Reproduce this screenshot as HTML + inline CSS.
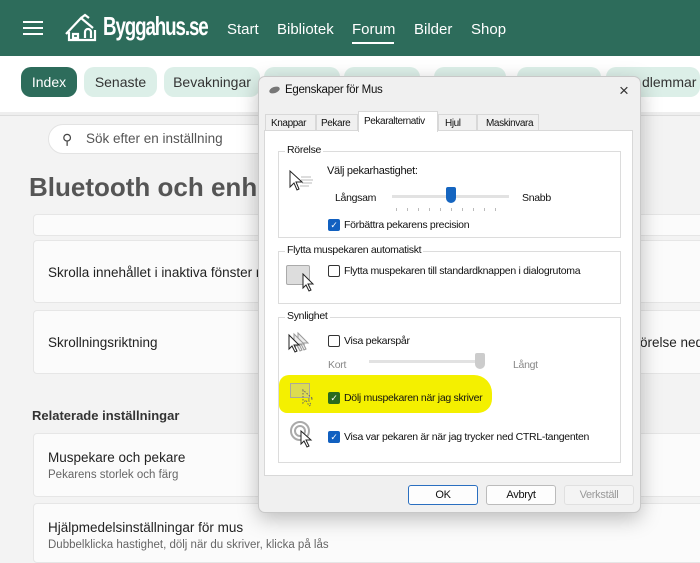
<!DOCTYPE html>
<html><head><meta charset="utf-8"><style>
*{box-sizing:border-box;margin:0;padding:0}
body{width:700px;height:554px;overflow:hidden;background:#f3f3f3;font-family:"Liberation Sans","DejaVu Sans",sans-serif;position:relative;white-space:nowrap}
.abs{position:absolute}
.nav{left:0;top:0;width:700px;height:56px;background:#2d6c5b}
.nav .l{color:#fff;font-size:15px;top:21px}
.pills{left:0;top:56px;width:700px;height:56px;background:#fff}
.pill{top:67px;height:30px;border-radius:10px;background:#dcefe8;color:#333;font-size:14px;line-height:30px;text-align:center}
.card{background:#fbfbfb;border:1px solid #e6e6e6;border-radius:4px}
.t{font-size:13.5px;color:#222}
.dlg{left:258px;top:76px;width:383px;height:437px;background:#f0f0f0;border:1px solid #c8c8c8;border-radius:7px;box-shadow:0 6px 20px rgba(0,0,0,.25);font-size:10.5px;letter-spacing:-.3px;color:#111;font-family:"Liberation Sans",sans-serif}
.dlg .abs{position:absolute}
.box{border:1px solid #dcdcdc}
.lg{background:#fff;padding:0 2px}
.cb{width:12px;height:12px;border-radius:2px;border:1px solid #333;background:#fff}
.cbc{width:12px;height:12px;border-radius:2px;background:#1160c0;color:#fff;font-size:9px;line-height:12px;text-align:center}
.btn{height:20px;border:1px solid #bbb;border-radius:3px;background:#fdfdfd;text-align:center;line-height:18px;font-size:11px}
.tab{font-size:10px;letter-spacing:-.4px}
</style></head><body>
<div class="abs nav">
 <div class="abs" style="left:23px;top:21px;width:20px;height:2px;background:#fff;box-shadow:0 6px 0 #fff,0 12px 0 #fff"></div>
 <svg class="abs" style="left:63px;top:12px" width="38" height="32" viewBox="0 0 38 32"><path d="M3 22 L18 6 L30 16 M6 20 L6 28 L32 28 L32 18 M18 6 L22 3 L26 6 M10 22 h5 v4 h-5z M22 26 v-6 a3 3 0 0 1 6 0 v6" stroke="#fff" stroke-width="2.2" fill="none"/></svg>
 <div class="abs" style="left:103px;top:11px;color:#fff;font-size:26px;font-weight:bold;letter-spacing:-1.5px;transform:scaleX(.72);transform-origin:left">Byggahus.se</div>
 <div class="abs l" style="left:227px">Start</div>
 <div class="abs l" style="left:277px">Bibliotek</div>
 <div class="abs l" style="left:352px">Forum</div>
 <div class="abs" style="left:352px;top:42px;width:42px;height:2px;background:#fff"></div>
 <div class="abs l" style="left:414px">Bilder</div>
 <div class="abs l" style="left:471px">Shop</div>
</div>
<div class="abs pills"></div>
<div class="abs pill" style="left:21px;width:56px;background:#2d6c5b;color:#fff">Index</div>
<div class="abs pill" style="left:84px;width:73px">Senaste</div>
<div class="abs pill" style="left:164px;width:96px">Bevakningar</div>
<div class="abs pill" style="left:264px;width:76px"></div>
<div class="abs pill" style="left:344px;width:76px"></div>
<div class="abs pill" style="left:434px;width:72px"></div>
<div class="abs pill" style="left:517px;width:84px"></div>
<div class="abs pill" style="left:606px;width:94px;text-align:left;padding-left:36px">dlemmar</div>
<div class="abs" style="left:0;top:112px;width:700px;height:4px;background:#eee;border-bottom:1px solid #ddd"></div>
<div class="abs" style="left:48px;top:124px;width:230px;height:30px;border-radius:15px;background:#fff;border:1px solid #e3e3e3"></div>
<div class="abs" style="left:62px;top:131px;font-size:14px;color:#444">&#9906;</div>
<div class="abs" style="left:86px;top:131px;font-size:13.5px;color:#555">Sök efter en inställning</div>
<div class="abs" style="left:29px;top:172px;font-size:26px;font-weight:bold;color:#555">Bluetooth och enhe</div>
<div class="abs card" style="left:33px;top:214px;width:680px;height:22px"></div>
<div class="abs card" style="left:33px;top:240px;width:680px;height:63px"></div>
<div class="abs t" style="left:48px;top:265px">Skrolla innehållet i inaktiva fönster n</div>
<div class="abs card" style="left:33px;top:310px;width:680px;height:64px"></div>
<div class="abs t" style="left:48px;top:335px">Skrollningsriktning</div>
<div class="abs t" style="left:640px;top:335px">örelse ned</div>
<div class="abs" style="left:32px;top:408px;font-size:13px;font-weight:bold;color:#333">Relaterade inställningar</div>
<div class="abs card" style="left:33px;top:433px;width:680px;height:64px"></div>
<div class="abs t" style="left:48px;top:450px">Muspekare och pekare</div>
<div class="abs" style="left:48px;top:469px;font-size:11.5px;color:#666">Pekarens storlek och färg</div>
<div class="abs card" style="left:33px;top:503px;width:680px;height:60px"></div>
<div class="abs t" style="left:48px;top:520px">Hjälpmedelsinställningar för mus</div>
<div class="abs" style="left:48px;top:539px;font-size:11.5px;color:#666">Dubbelklicka hastighet, dölj när du skriver, klicka på lås</div>

<div class="abs dlg">
 <div class="abs" style="left:10px;top:10px;width:11px;height:6px;border-radius:50%;background:#777;transform:rotate(-20deg)"></div>
 <div class="abs" style="left:26px;top:7px;font-size:11.5px">Egenskaper för Mus</div>
 <div class="abs" style="left:360px;top:4px;font-size:17px;color:#333">×</div>
 <div class="abs" style="left:5px;top:53px;width:369px;height:346px;background:#fff;border:1px solid #d8d8d8"></div>
 <div class="abs tab" style="left:6px;top:37px;width:51px;height:17px;border:1px solid #d8d8d8;border-bottom:none;padding:3px 5px">Knappar</div>
 <div class="abs tab" style="left:57px;top:37px;width:42px;height:17px;border:1px solid #d8d8d8;border-bottom:none;padding:3px 4px">Pekare</div>
 <div class="abs tab" style="left:99px;top:34px;width:80px;height:21px;background:#fff;border:1px solid #d8d8d8;border-bottom:none;padding:4px 5px">Pekaralternativ</div>
 <div class="abs tab" style="left:179px;top:37px;width:39px;height:17px;border:1px solid #d8d8d8;border-bottom:none;padding:3px 6px">Hjul</div>
 <div class="abs tab" style="left:218px;top:37px;width:62px;height:17px;border:1px solid #d8d8d8;border-bottom:none;padding:3px 8px">Maskinvara</div>

 <div class="abs box" style="left:19px;top:74px;width:343px;height:87px"></div>
 <div class="abs lg" style="left:26px;top:67px">Rörelse</div>
 <svg class="abs" style="left:28px;top:92px" width="28" height="26"><path d="M3 2 L3 18 L7 14 L10 21 L12 20 L9 13 L15 13 Z" fill="#fff" stroke="#222"/><path d="M14 8h10M14 11h12M15 14h10M13 17h9" stroke="#bbb"/></svg>
 <div class="abs" style="left:68px;top:88px;font-size:11px">Välj pekarhastighet:</div>
 <div class="abs" style="left:76px;top:115px">Långsam</div>
 <div class="abs" style="left:263px;top:115px">Snabb</div>
 <div class="abs" style="left:133px;top:118px;width:117px;height:3px;background:#e2e2e2"></div>
 <div class="abs" style="left:187px;top:110px;width:10px;height:16px;background:#1565c0;border-radius:2px 2px 5px 5px"></div>
 <div class="abs" style="left:137px;top:131px;width:110px;height:3px;background:repeating-linear-gradient(90deg,#bbb 0 1px,transparent 1px 11px)"></div>
 <div class="abs cbc" style="left:69px;top:142px">✓</div>
 <div class="abs" style="left:85px;top:142px">Förbättra pekarens precision</div>

 <div class="abs box" style="left:19px;top:174px;width:343px;height:53px"></div>
 <div class="abs lg" style="left:26px;top:167px">Flytta muspekaren automatiskt</div>
 <div class="abs" style="left:27px;top:188px;width:24px;height:20px;background:#ddd;border:1px solid #aaa;border-radius:2px"></div>
 <svg class="abs" style="left:42px;top:196px" width="16" height="20"><path d="M2 1 L2 15 L5 12 L8 18 L10 17 L7 11 L12 11 Z" fill="#fff" stroke="#222"/></svg>
 <div class="abs cb" style="left:69px;top:188px"></div>
 <div class="abs" style="left:85px;top:188px">Flytta muspekaren till standardknappen i dialogrutoma</div>

 <div class="abs box" style="left:19px;top:240px;width:343px;height:146px"></div>
 <div class="abs lg" style="left:26px;top:233px">Synlighet</div>
 <svg class="abs" style="left:27px;top:254px" width="32" height="26"><g fill="#eee" stroke="#999"><path d="M12 2 L12 16 L15 13 L18 19 L20 18 L17 12 L22 12Z"/><path d="M8 3 L8 17 L11 14 L14 20 L16 19 L13 13 L18 13Z"/></g><path d="M3 4 L3 18 L6 15 L9 21 L11 20 L8 14 L13 14Z" fill="#fff" stroke="#222"/></svg>
 <div class="abs cb" style="left:69px;top:258px"></div>
 <div class="abs" style="left:85px;top:258px">Visa pekarspår</div>
 <div class="abs" style="left:69px;top:282px;color:#888">Kort</div>
 <div class="abs" style="left:254px;top:282px;color:#888">Långt</div>
 <div class="abs" style="left:110px;top:283px;width:116px;height:3px;background:#e2e2e2"></div>
 <div class="abs" style="left:216px;top:276px;width:10px;height:16px;background:#ccc;border-radius:2px 2px 5px 5px"></div>
 <div class="abs" style="left:20px;top:298px;width:213px;height:38px;background:#f4f000;border-radius:10px 18px 14px 8px"></div>
 <div class="abs" style="left:31px;top:306px;width:20px;height:15px;border:1px solid #aa9;background:#dddc50"></div>
 <svg class="abs" style="left:42px;top:312px" width="14" height="18"><path d="M2 1 L2 14 L5 11 L8 17 L10 16 L7 10 L12 10 Z" fill="none" stroke="#666" stroke-dasharray="1.5 1.5"/></svg>
 <div class="abs cbc" style="left:69px;top:315px;background:#2a6a1e">✓</div>
 <div class="abs" style="left:85px;top:315px">Dölj muspekaren när jag skriver</div>
 <svg class="abs" style="left:30px;top:343px" width="28" height="28"><circle cx="11" cy="11" r="9" fill="none" stroke="#aaa" stroke-width="2"/><circle cx="11" cy="11" r="5" fill="none" stroke="#aaa" stroke-width="2"/><path d="M12 11 L12 24 L15 21 L18 27 L20 26 L17 20 L22 20Z" fill="#fff" stroke="#222"/></svg>
 <div class="abs cbc" style="left:69px;top:354px">✓</div>
 <div class="abs" style="left:85px;top:354px">Visa var pekaren är när jag trycker ned CTRL-tangenten</div>

 <div class="abs btn" style="left:149px;top:408px;width:70px;border:1px solid #2a6fc0">OK</div>
 <div class="abs btn" style="left:227px;top:408px;width:70px">Avbryt</div>
 <div class="abs btn" style="left:305px;top:408px;width:70px;color:#999;background:#f4f4f4;border-color:#e0e0e0">Verkställ</div>
</div>
</body></html>
